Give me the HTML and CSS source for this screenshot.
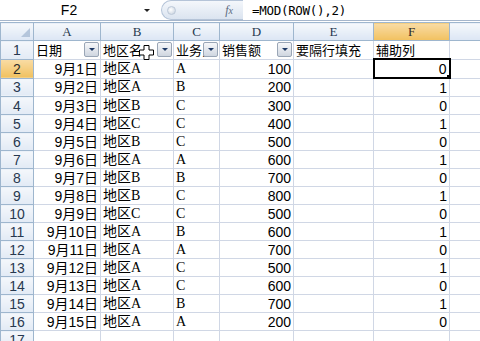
FILE: index.html
```html
<!DOCTYPE html>
<html lang="zh-CN">
<head>
  <meta charset="UTF-8" />
  <title>隔行填充 - MOD(ROW(),2)</title>
  <link rel="stylesheet" href="styles.css">
</head>
<body>
  <div class="formula-bar">
    <div class="name-box">F2</div>
    <div class="name-drop"></div>
    <div class="fx-pill">
      <span class="fx-knob"></span>
      <span class="fx">f<i>x</i></span>
    </div>
    <div class="formula">=MOD(ROW(),2)</div>
  </div>

  <div class="sheet-wrap">
    <table class="sheet">
      <colgroup>
        <col class="c-head"><col class="c-a"><col class="c-b"><col class="c-c">
        <col class="c-d"><col class="c-e"><col class="c-f"><col class="c-g">
      </colgroup>
      <thead>
        <tr>
          <th class="corner"><span class="corner-tri"></span></th>
          <th>A</th><th>B</th><th>C</th><th>D</th><th>E</th>
          <th class="sel">F</th><th></th>
        </tr>
      </thead>
      <tbody id="rows">
        <tr>
          <th>1</th>
          <td class="filter">日期<span class="drop"></span></td>
          <td class="filter">地区名<span class="drop"></span></td>
          <td class="filter">业务员<span class="drop"></span></td>
          <td class="filter">销售额<span class="drop"></span></td>
          <td>要隔行填充</td>
          <td class="under">辅助列</td>
          <td></td>
        </tr>
      </tbody>
    </table>
    <svg class="cursor" width="15" height="15" viewBox="0 0 15 15">
      <path d="M5 0.5h5v4.5h4.5v5h-4.5v4.5h-5v-4.5h-4.5v-5h4.5z" fill="#fff" stroke="#000" stroke-width="1"/>
    </svg>
  </div>

  <script>
    const data = [
      ["9月1日", "地区A", "A", 100],
      ["9月2日", "地区A", "B", 200],
      ["9月3日", "地区B", "C", 300],
      ["9月4日", "地区C", "C", 400],
      ["9月5日", "地区B", "C", 500],
      ["9月6日", "地区A", "A", 600],
      ["9月7日", "地区B", "B", 700],
      ["9月8日", "地区B", "C", 800],
      ["9月9日", "地区C", "C", 500],
      ["9月10日", "地区A", "B", 600],
      ["9月11日", "地区A", "A", 700],
      ["9月12日", "地区A", "C", 500],
      ["9月13日", "地区A", "C", 600],
      ["9月14日", "地区A", "B", 700],
      ["9月15日", "地区A", "A", 200]
    ];

    const tbody = document.getElementById("rows");
    data.forEach((row, i) => {
      const r = i + 2;
      const tr = document.createElement("tr");
      tr.innerHTML = `
        <th class="${r === 2 ? "sel" : ""}">${r}</th>
        <td class="num">${row[0]}</td>
        <td class="text">${row[1]}</td>
        <td class="text">${row[2]}</td>
        <td class="num">${row[3]}</td>
        <td></td>
        <td class="num${r === 2 ? " active" : ""}">${r % 2}</td>
        <td></td>
      `;
      tbody.appendChild(tr);
    });

    const last = document.createElement("tr");
    last.innerHTML = "<th>17</th><td></td><td></td><td></td><td></td><td></td><td></td><td></td>";
    tbody.appendChild(last);
  </script>
</body>
</html>
```

FILE: styles.css
```css
:root {
  --grid: #d0d7e5;
  --head-border: #9eb6ce;
  --head-text: #27384f;
}

body {
  margin: 0;
  width: 480px;
  height: 341px;
  overflow: hidden;
  background: #fff;
  font-family: "Noto Sans CJK SC", sans-serif;
}

/* formula bar */
.formula-bar {
  display: flex;
  align-items: center;
  height: 20px;
  border-bottom: 1px solid #a5b6cc;
  background: #fff;
}

.name-box {
  width: 138px;
  text-align: center;
  font-family: "Liberation Sans", sans-serif;
  font-size: 14px;
  color: #000;
}

.name-drop {
  width: 0;
  height: 0;
  margin-left: 6px;
  border-left: 3px solid transparent;
  border-right: 3px solid transparent;
  border-top: 3px solid #222;
}

.fx-pill {
  display: flex;
  align-items: center;
  justify-content: space-between;
  width: 82px;
  height: 20px;
  margin-left: 11px;
  box-sizing: border-box;
  padding: 0 10px 0 5px;
  border: 1px solid #b5c4d8;
  border-right: none;
  border-radius: 12px 0 0 12px;
  background: linear-gradient(#f4f7fb, #dbe4f0);
}

.fx-knob {
  width: 7px;
  height: 7px;
  border-radius: 50%;
  background: radial-gradient(circle at 40% 40%, #fff, #c2cddb);
  border: 1px solid #bcc8d8;
}

.fx {
  font-family: "Liberation Serif", serif;
  font-style: italic;
  font-size: 12px;
  color: #5a6a80;
}

.fx i {
  font-size: 10px;
}

.formula {
  margin-left: 9px;
  font-family: "DejaVu Sans Mono", monospace;
  font-size: 12.5px;
  letter-spacing: -0.3px;
  color: #000;
}

/* sheet */
.sheet-wrap {
  position: relative;
  margin-top: 1px;
}

.sheet {
  border-collapse: collapse;
  table-layout: fixed;
  width: 481px;
  font-size: 13px;
}

.c-head { width: 33px; }
.c-a { width: 67px; }
.c-b { width: 73px; }
.c-c { width: 46px; }
.c-d { width: 74px; }
.c-e { width: 80px; }
.c-f { width: 76px; }
.c-g { width: 32px; }

.sheet tr {
  height: 18px;
}

.sheet th {
  padding: 0;
  height: 17px;
  font-weight: normal;
  color: var(--head-text);
  background: linear-gradient(#f4f7fb, #e2eaf5);
  border: 1px solid var(--head-border);
  line-height: 16px;
}

.sheet thead th {
  font-family: "Liberation Serif", serif;
  font-size: 13px;
  background: linear-gradient(#f5f8fc, #dce6f4);
}

.sheet tbody th {
  font-family: "Liberation Sans", sans-serif;
  font-size: 14px;
}

.sheet th.sel {
  background: linear-gradient(#f9dca6, #f1c15f);
  color: #2b2b2b;
}

.corner {
  position: relative;
}

.corner-tri {
  position: absolute;
  right: 3px;
  bottom: 3px;
  width: 0;
  height: 0;
  border-left: 9px solid transparent;
  border-bottom: 9px solid #b4c5db;
}

.sheet td {
  padding: 0 2px;
  height: 17px;
  border: 1px solid var(--grid);
  white-space: nowrap;
  overflow: hidden;
  line-height: 16px;
  color: #000;
}

.sheet td.num {
  text-align: right;
  font-family: "Liberation Sans", "Noto Sans CJK SC", sans-serif;
  font-size: 14px;
}

.sheet td.text {
  font-family: "Liberation Serif", "Noto Sans CJK SC", serif;
  font-size: 14px;
}

.sheet td.filter {
  position: relative;
  padding-right: 18px;
  overflow: hidden;
}

.drop {
  position: absolute;
  right: 1px;
  top: 1px;
  width: 15px;
  height: 15px;
  box-sizing: border-box;
  border: 1px solid #9aa6b6;
  border-radius: 2px;
  background: linear-gradient(#f7f8fa, #cfd6e0);
}

.drop::after {
  content: "";
  position: absolute;
  left: 4px;
  top: 5px;
  border-left: 3px solid transparent;
  border-right: 3px solid transparent;
  border-top: 3px solid #1f3a66;
}

.sheet td.under {
  border-bottom: 2px solid #000;
}

.sheet td.active {
  position: relative;
  border: 2px solid #000;
  padding-right: 2px;
}

.sheet td.active::after {
  content: "";
  position: absolute;
  right: -4px;
  bottom: -4px;
  width: 5px;
  height: 5px;
  background: #000;
  border: 1px solid #fff;
}

.cursor {
  position: absolute;
  left: 139px;
  top: 23px;
}
```
